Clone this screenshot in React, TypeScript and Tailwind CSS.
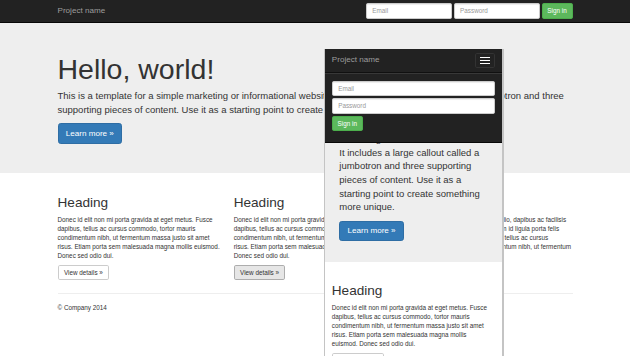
import React from "react";

const col1 = [
  "Donec id elit non mi porta gravida at eget metus. Fusce",
  "dapibus, tellus ac cursus commodo, tortor mauris",
  "condimentum nibh, ut fermentum massa justo sit amet",
  "risus. Etiam porta sem malesuada magna mollis euismod.",
  "Donec sed odio dui.",
];
const col3 = [
  "Donec sed odio dui. Cras justo odio, dapibus ac facilisis",
  "in, egestas eget quam. Vestibulum id ligula porta felis",
  "euismod semper. Fusce dapibus, tellus ac cursus",
  "commodo, tortor mauris condimentum nibh, ut fermentum",
  "massa justo sit amet risus.",
];
const colMobile = [
  "Donec id elit non mi porta gravida at eget metus. Fusce",
  "dapibus, tellus ac cursus commodo, tortor mauris",
  "condimentum nibh, ut fermentum massa justo sit amet",
  "risus. Etiam porta sem malesuada magna mollis",
  "euismod. Donec sed odio dui.",
];
const jumboMobile = [
  "This is a template for a simple",
  "marketing or informational website.",
  "It includes a large callout called a",
  "jumbotron and three supporting",
  "pieces of content. Use it as a",
  "starting point to create something",
  "more unique.",
];

function Lines({ lines }: { lines: string[] }) {
  return (
    <>
      {lines.map((l, i) => (
        <span key={i} className="block whitespace-nowrap">
          {l}
        </span>
      ))}
    </>
  );
}

function Column({ lines, active }: { lines: string[]; active?: boolean }) {
  return (
    <div>
      <h2 className="mt-[9px] mb-[4.5px] text-[13.6px] leading-[15px] font-normal">Heading</h2>
      <p className="text-[6.33px] leading-[9.04px] mb-[4.5px]">
        <Lines lines={lines} />
      </p>
      <p className="mb-[4.5px] flex">
        <span
          className={
            "inline-flex items-center h-[15.4px] px-[5.4px] rounded-[1.8px] border text-[6.33px] leading-[9.04px] " +
            (active ? "bg-[#e6e6e6] border-[#adadad]" : "bg-white border-[#ccc]")
          }
        >
          View details »
        </span>
      </p>
    </div>
  );
}

function Input({ placeholder, className }: { placeholder: string; className?: string }) {
  return (
    <div
      className={
        "h-[15.4px] bg-white border border-[#ccc] rounded-[1.8px] px-[5.4px] flex items-center text-[6.33px] text-[#999] shadow-[inset_0_1px_1px_rgba(0,0,0,0.075)] " +
        (className ?? "")
      }
    >
      {placeholder}
    </div>
  );
}

function SignIn() {
  return (
    <div className="h-[15.4px] w-[31px] bg-[#5cb85c] border border-[#4cae4c] rounded-[1.8px] flex items-center justify-center text-[6.33px] text-white">
      Sign in
    </div>
  );
}

export default function App() {
  return (
    <div className="relative w-[630px] h-[356px] overflow-hidden bg-white text-[#333] font-['Liberation_Sans',Arial,sans-serif]">
      {/* Desktop navbar */}
      <nav className="h-[23px] bg-[#222] border-b border-[#080808]">
        <div className="mx-auto w-[515px] h-full flex items-center justify-between">
          <span className="text-[8.1px] text-[#9d9d9d]">Project name</span>
          <div className="flex items-center gap-[1.8px]">
            <Input placeholder="Email" className="w-[86px]" />
            <Input placeholder="Password" className="w-[86px]" />
            <SignIn />
          </div>
        </div>
      </nav>

      {/* Jumbotron */}
      <div className="bg-[#eee] pt-[21.7px] pb-[21.7px] mb-[13.6px]">
        <div className="mx-auto w-[515px]">
          <h1 className="mt-[9px] mb-[4.5px] text-[28.5px] leading-[31.3px] font-normal">Hello, world!</h1>
          <p className="text-[9.5px] leading-[13.6px] mb-[6.8px]">
            <span className="block whitespace-nowrap">
              This is a template for a simple marketing or informational website. It includes a large callout called a jumbotron and three
            </span>
            <span className="block whitespace-nowrap">
              supporting pieces of content. Use it as a starting point to create something more unique.
            </span>
          </p>
          <p className="mb-[6.8px] flex">
            <span className="inline-flex items-center h-[20.8px] px-[7.2px] rounded-[2.7px] bg-[#337ab7] border border-[#2e6da4] text-white text-[8.1px]">
              Learn more »
            </span>
          </p>
        </div>
      </div>

      {/* Columns */}
      <div className="mx-auto w-[515px]">
        <div className="grid grid-cols-3 gap-x-[13.6px]">
          <Column lines={col1} />
          <Column lines={col1} active />
          <Column lines={col3} />
        </div>
        <hr className="mt-[9px] mb-[9px] border-t border-[#eee]" />
        <footer>
          <p className="text-[6.33px] leading-[9.04px]">© Company 2014</p>
        </footer>
      </div>

      {/* Mobile preview window */}
      <div className="absolute left-[324px] top-[49px] w-[180px] h-[320px] bg-white border-l border-r-2 border-[#c4c4c4] overflow-hidden">
        <div className="relative">
          <div className="absolute inset-x-0 top-0 z-10 bg-[#222] border-b border-[#080808]">
            <div className="h-[22.6px] flex items-center justify-between px-[6.8px]">
              <span className="text-[8.1px] text-[#9d9d9d]">Project name</span>
              <div className="w-[20px] h-[15.4px] border border-[#333] rounded-[1.8px] flex flex-col items-center justify-center gap-[2px]">
                <span className="block w-[10px] h-[1px] bg-white" />
                <span className="block w-[10px] h-[1px] bg-white" />
                <span className="block w-[10px] h-[1px] bg-white" />
              </div>
            </div>
            <div className="border-t border-[#101010] shadow-[inset_0_1px_0_rgba(255,255,255,0.1)]">
              <div className="mt-[3.6px] mb-[6px] px-[6.8px] pt-[4.5px] pb-[5px] flex flex-col gap-[2.3px] items-start">
                <Input placeholder="Email" className="w-full" />
                <Input placeholder="Password" className="w-full" />
                <SignIn />
              </div>
            </div>
          </div>

          <div className="bg-[#eee] pt-[69.6px] pb-[13.6px] px-[14.3px]">
            <p className="text-[9.5px] leading-[13.6px] mb-[6.8px]">
              <Lines lines={jumboMobile} />
            </p>
            <p className="mb-[6.8px] flex">
              <span className="inline-flex items-center h-[20.8px] px-[7.2px] rounded-[2.7px] bg-[#337ab7] border border-[#2e6da4] text-white text-[8.1px]">
                Learn more »
              </span>
            </p>
          </div>

          <div className="mt-[21.6px] px-[6.8px]">
            <Column lines={colMobile} />
          </div>
        </div>
      </div>
    </div>
  );
}
